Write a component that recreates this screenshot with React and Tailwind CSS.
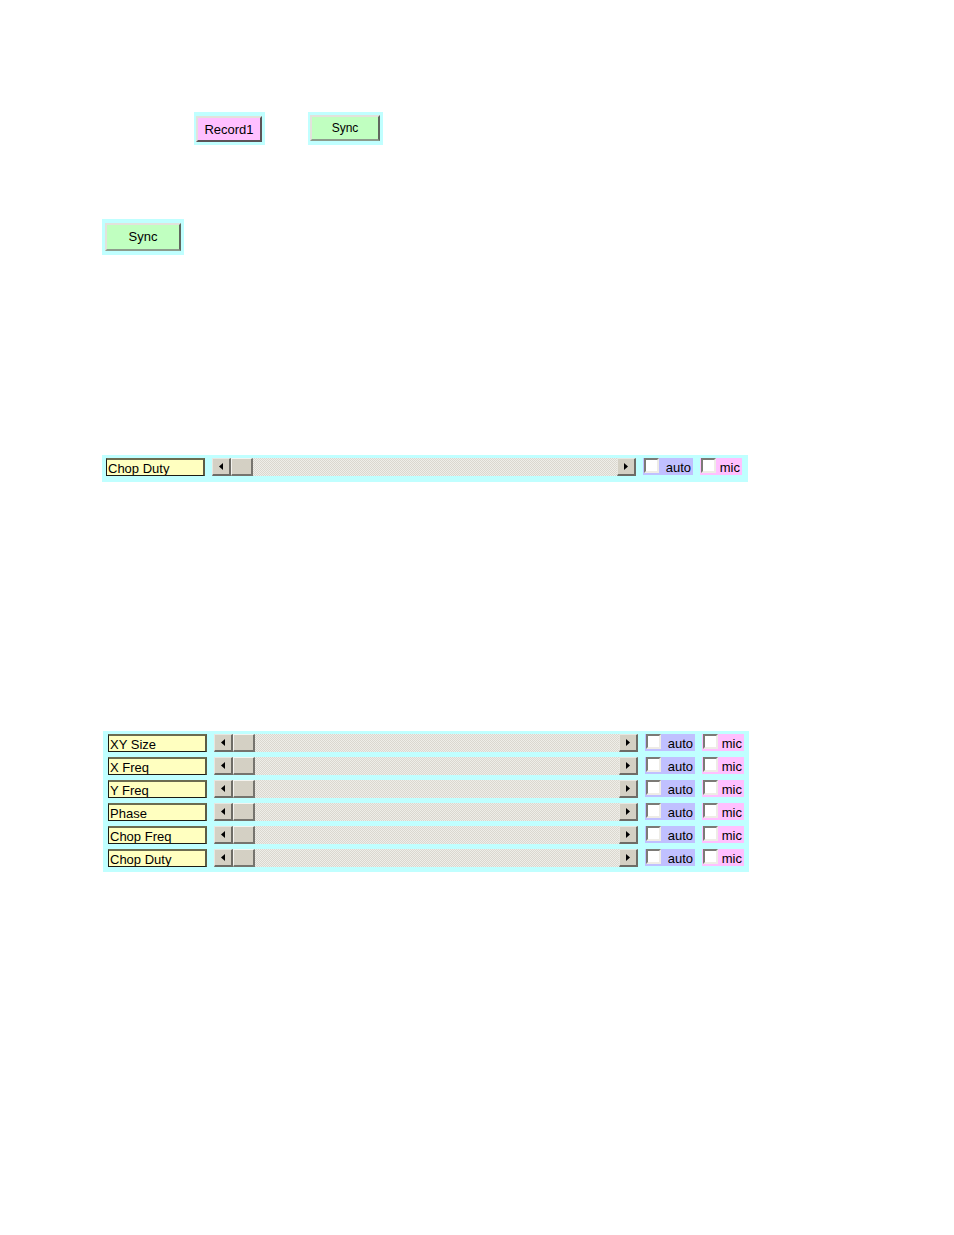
import React from "react";

const SWEEP_ROWS = ["XY Size", "X Freq", "Y Freq", "Phase", "Chop Freq", "Chop Duty"];

function Arrow({ direction }) {
  return (
    <svg className="block" width="4" height="7" viewBox="0 0 4 7" aria-hidden="true">
      {direction === "left" ? (
        <path d="M4 0v7L0 3.5z" fill="#000" />
      ) : (
        <path d="M0 0v7l4-3.5z" fill="#000" />
      )}
    </svg>
  );
}

function ScrollButton({ direction, label }) {
  return (
    <button
      type="button"
      aria-label={label}
      className="flex h-full w-[19px] shrink-0 items-center justify-center border-t border-l border-r-2 border-b-2 border-t-[#e8e6e0] border-l-[#e8e6e0] border-r-[#6e6c66] border-b-[#6e6c66] bg-[#d4d0c4]"
    >
      <Arrow direction={direction} />
    </button>
  );
}

function ScrollBar({ id, name }) {
  return (
    <div className="flex h-full min-w-0 flex-1">
      <ScrollButton direction="left" label={`Decrease ${name}`} />
      <input
        id={id}
        type="range"
        min="0"
        max="100"
        defaultValue="0"
        className="h-full min-w-0 flex-1 appearance-none bg-[repeating-conic-gradient(#dad7cf_0_25%,#efeee9_0_50%)] bg-[length:2px_2px] [&::-webkit-slider-thumb]:h-[18px] [&::-webkit-slider-thumb]:w-[22px] [&::-webkit-slider-thumb]:appearance-none [&::-webkit-slider-thumb]:border-t [&::-webkit-slider-thumb]:border-r-2 [&::-webkit-slider-thumb]:border-b-2 [&::-webkit-slider-thumb]:border-l [&::-webkit-slider-thumb]:border-t-[#f4f3ef] [&::-webkit-slider-thumb]:border-r-[#76746e] [&::-webkit-slider-thumb]:border-b-[#76746e] [&::-webkit-slider-thumb]:border-l-[#f4f3ef] [&::-webkit-slider-thumb]:bg-[#d4d0c4]"
      />
      <ScrollButton direction="right" label={`Increase ${name}`} />
    </div>
  );
}

function Check({ text, className }) {
  return (
    <label
      className={`flex h-[17px] shrink-0 items-start justify-between pr-[2px] pl-px leading-5 ${className}`}
    >
      <input
        type="checkbox"
        className="size-[15px] appearance-none border-t-2 border-r-2 border-b-2 border-l-2 border-t-[#7c7a76] border-r-[#eeece6] border-b-[#eeece6] border-l-[#7c7a76] bg-white checked:bg-black"
      />
      <span>{text}</span>
    </label>
  );
}

function ControlRow({ id, name }) {
  return (
    <div className="flex h-[18px] items-start gap-[7px] text-[13px]">
      <label
        htmlFor={id}
        className="h-full w-[99px] shrink-0 overflow-hidden border border-t-2 border-r-2 border-t-[#6c6c50] border-r-[#5c5c44] border-b-[#1c1c14] border-l-[#1c1c14] bg-[#ffffc0] pl-px leading-[18px] whitespace-nowrap"
      >
        {name}
      </label>
      <ScrollBar id={id} name={name} />
      <Check text="auto" className="w-[50px] bg-[#c0c0ff]" />
      <Check text="mic" className="w-[42px] bg-[#ffc0ff]" />
    </div>
  );
}

function PushButton({ children, className }) {
  return (
    <button
      type="button"
      className={`border-2 border-t-[#e2e2dc] border-l-[#e2e2dc] ${className}`}
    >
      {children}
    </button>
  );
}

export default function App() {
  return (
    <main className="min-h-screen bg-white pt-28 pr-4 pb-16 pl-[102px] font-['Liberation_Sans',Arial,sans-serif] text-black">
      <div className="flex gap-[43px] pl-[92px]">
        <div className="bg-[#c0ffff] pt-1 pr-[3px] pb-[3px] pl-[2px]">
          <PushButton className="h-[26px] w-[66px] border-r-[#5c5458] border-b-[#5c5458] bg-[#ffc0ff] pt-[2px] text-[13px]">
            Record1
          </PushButton>
        </div>
        <div className="bg-[#c0ffff] pt-[3px] pr-[3px] pb-1 pl-[2px]">
          <PushButton className="h-[26px] w-[70px] border-r-[#60685f] border-b-[#8c9c8c] bg-[#c0ffc0] text-xs">
            Sync
          </PushButton>
        </div>
      </div>

      <div className="mt-[74px] w-fit bg-[#c0ffff] pt-1 pr-[3px] pb-1 pl-[3px]">
        <PushButton className="h-7 w-[76px] border-r-[#60685f] border-b-[#8c9c8c] bg-[#c0ffc0] text-[13px]">
          Sync
        </PushButton>
      </div>

      <section className="mt-[200px] max-w-[646px] bg-[#c0ffff] pt-[3px] pr-[6px] pb-[6px] pl-1">
        <ControlRow id="duty" name="Chop Duty" />
      </section>

      <section className="mt-[249px] ml-px flex max-w-[646px] flex-col gap-[5px] bg-[#c0ffff] pt-[3px] pr-[5px] pb-[5px] pl-[5px]">
        {SWEEP_ROWS.map((name, idx) => (
          <ControlRow key={name} id={`sweep-${idx}`} name={name} />
        ))}
      </section>
    </main>
  );
}
